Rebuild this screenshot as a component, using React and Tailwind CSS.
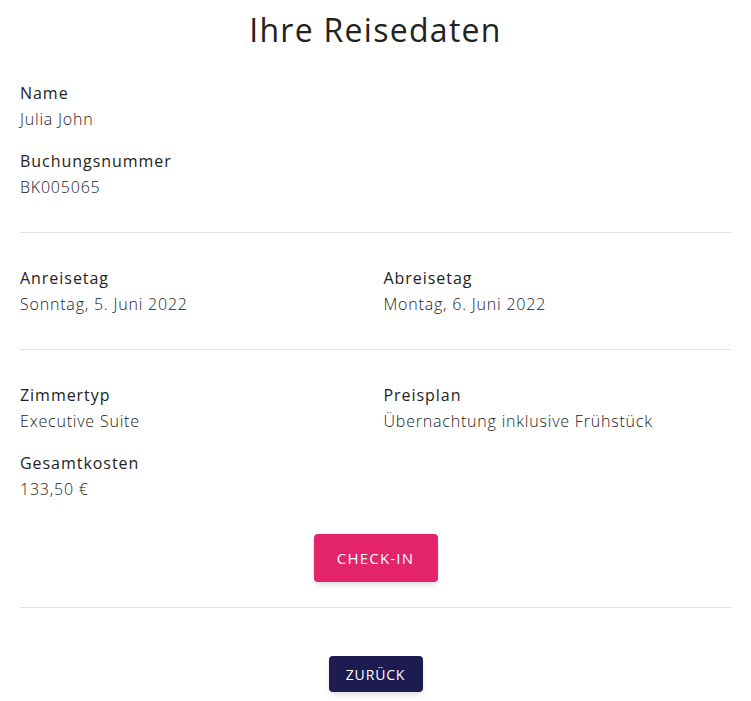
export default function App() {
  const font = { fontFamily: '"Open Sans", "DejaVu Sans", sans-serif' };
  const Field = ({ label, value }) => (
    <div>
      <div className="text-[16px] leading-6 font-medium tracking-[0.06em] text-[#222]">{label}</div>
      <div className="mt-[2px] text-[16px] leading-6 font-light tracking-[0.05em] text-[#222]">{value}</div>
    </div>
  );
  return (
    <div className="w-[751px] min-h-[701px] bg-white px-5" style={font}>
      <h1 className="pt-[10px] text-center text-[32px] leading-10 font-normal tracking-[0.04em] text-[#222]">Ihre Reisedaten</h1>
      <div className="mt-[31px] flex flex-col gap-[18px]">
        <Field label="Name" value="Julia John" />
        <Field label="Buchungsnummer" value="BK005065" />
      </div>
      <hr className="mt-[33px] border-0 border-t border-[#e0e0e0]" />
      <div className="mt-[33px] grid grid-cols-2 gap-x-4">
        <Field label="Anreisetag" value="Sonntag, 5. Juni 2022" />
        <Field label="Abreisetag" value="Montag, 6. Juni 2022" />
      </div>
      <hr className="mt-[33px] border-0 border-t border-[#e0e0e0]" />
      <div className="mt-[33px] grid grid-cols-2 gap-x-4 gap-y-[18px]">
        <Field label="Zimmertyp" value="Executive Suite" />
        <Field label="Preisplan" value="Übernachtung inklusive Frühstück" />
        <Field label="Gesamtkosten" value="133,50 €" />
      </div>
      <div className="mt-[33px] flex justify-center">
        <button className="h-12 w-[124px] rounded bg-[#e3236a] text-[15px] tracking-[0.08em] text-white shadow-md">CHECK-IN</button>
      </div>
      <hr className="mt-[25px] border-0 border-t border-[#e0e0e0]" />
      <div className="mt-[48px] flex justify-center">
        <button className="h-9 w-[94px] rounded bg-[#1e1b50] text-[14px] tracking-[0.06em] text-white shadow-md">ZURÜCK</button>
      </div>
    </div>
  );
}
